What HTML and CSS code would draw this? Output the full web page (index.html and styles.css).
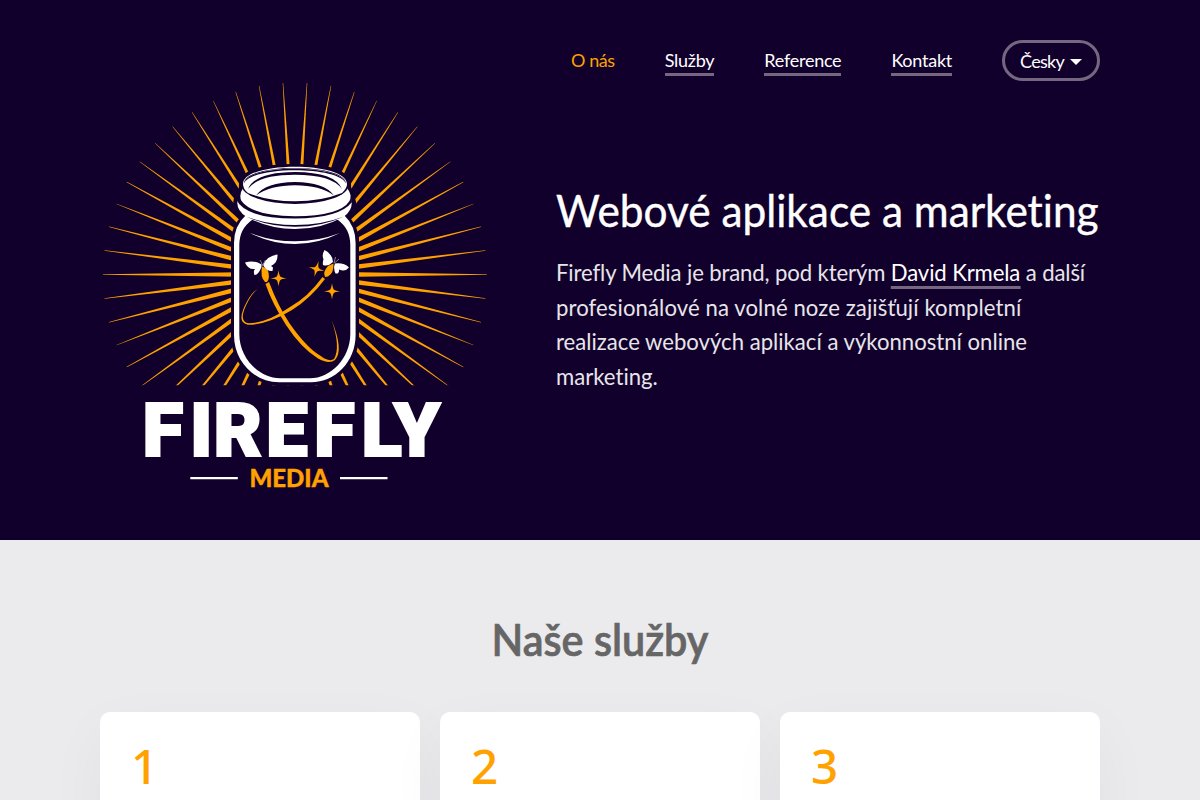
FILE: index.html
```html
<!DOCTYPE html>
<html lang="cs">
<head>
<meta charset="utf-8">
<title>Firefly Media</title>
<link rel="stylesheet" href="styles.css">
</head>
<body>
<header class="hero">
  <div class="hero-inner">
    <svg class="logo" viewBox="100 80 390 415" role="img" aria-label="Firefly Media">
      <defs>
        <clipPath id="sky"><rect x="100" y="80" width="390" height="305.3"/></clipPath>
        <g id="rays">
          <path id="ray" d="M295 271.3L487 274.3V274.7L295 277.7z"/>
          <use href="#ray" transform="rotate(7.2 295 274.5)"/>
          <use href="#ray" transform="rotate(14.4 295 274.5)"/>
          <use href="#ray" transform="rotate(21.6 295 274.5)"/>
          <use href="#ray" transform="rotate(28.8 295 274.5)"/>
        </g>
        <path id="spark" d="M0-8Q.9-2.1 2-1.6Q2.6-.9 8 0Q2.6.9 2 1.6Q.9 2.1 0 8Q-.9 2.1-2 1.6Q-2.6.9-8 0Q-2.6-.9-2-1.6Q-.9-2.1 0-8z"/>
      </defs>
      <g clip-path="url(#sky)" class="orange">
        <use href="#rays"/>
        <use href="#rays" transform="rotate(36 295 274.5)"/>
        <use href="#rays" transform="rotate(72 295 274.5)"/>
        <use href="#rays" transform="rotate(108 295 274.5)"/>
        <use href="#rays" transform="rotate(144 295 274.5)"/>
        <use href="#rays" transform="rotate(180 295 274.5)"/>
        <use href="#rays" transform="rotate(216 295 274.5)"/>
        <use href="#rays" transform="rotate(252 295 274.5)"/>
        <use href="#rays" transform="rotate(288 295 274.5)"/>
        <use href="#rays" transform="rotate(324 295 274.5)"/>
      </g>
      <path class="night" d="M231 238Q232 228 239 219Q231 210 234 198L239 187Q237 164 295 164Q353 164 351 187L355 198Q359 210 351 219Q358 228 359 238V336C359 364 336 385.6 311 385.6H279C254 385.6 231 364 231 336z"/>
      <path class="white" fill-rule="evenodd" d="M246 215Q234 226 234 243V335C234 362 255 382.3 279 382.3H311C335 382.3 355.6 362 355.6 335V243Q355.6 226 344 215zM252 220Q239.3 229 239.3 245V334C239.3 358 259 378.3 280 378.3H310C331 378.3 350.3 358 350.3 334V245Q350.3 229 338 220z"/>
      <path class="white" d="M238 199Q235 209 246 216.5Q268 229 295 229Q322 229 344 216.5Q354 209 351 199z"/>
      <path class="night" d="M246 216.500Q268 226.800 295 226.800Q322 226.800 344 216.500Q322 225 295 225Q268 225 246 216.500z"/>
      <path class="night" d="M236 199Q245 218.500 295 218.600Q340 218 352 202L350 190H240z"/>
      <path class="white" d="M243 188Q238.500 195 241.500 201Q253 216 295 216.200Q340 216 349.500 201Q352.500 195 347 188z"/>
      <ellipse class="night" cx="295" cy="185.200" rx="53.500" ry="18.800"/>
      <path class="white" fill-rule="evenodd" d="M243 184C243 161 347 161 347 184C347 188 344 191 342 193Q321 201.300 295 201.300Q269 201.300 248 193Q243 189 243 184zM244 183C246 163 344 163 346 183C341 163.500 249 163.500 244 183z"/>
      <path class="night" d="M243.800 184C246 163.500 344 163.500 346.200 184C340 165.800 250 165.800 243.800 184z"/>
      <path class="night" d="M248 189Q255 172.200 295 172Q335 172.200 342 189Q332 174.700 295 174.700Q258 174.700 248 189z"/>
      <path class="night" d="M256 195.500Q266 182.300 295 182.100Q324 182.300 334 195.500Q320 185.300 295 185.300Q270 185.300 256 195.500z"/>
      <path class="white" d="M250 233Q272 241.300 295 241.300Q318 241.300 340 233Q318 244 295 244Q272 244 250 233z"/>
      <g class="orange">
        <path d="M265.500 284L269 282Q278 306 290 324Q307 348 320 355.500Q329 362.500 334 359Q341 347 331.500 320Q344 350 335 360Q329 364.500 318 358.500Q301 348 286 325Q272 303 265.500 284z"/>
        <path d="M325 279L322.500 277Q308 297 290 307Q267 323 249 323.300Q237 322 248 301.500Q253 292 258 289Q252 292 247.500 300.500Q235 323 248 324.700Q267 325 292 310Q311 298 325 279z"/>
        <path d="M262 266.500L267.500 269Q270.500 278 267 282L265 282Q260 277 262 266.500z"/>
        <path d="M333.500 263.500L328 266Q322.500 272 325 277L328 276.500Q334 273 333.500 263.500z"/>
        <use href="#spark" x="278.500" y="278.300"/>
        <use href="#spark" x="332" y="291.300"/>
        <use href="#spark" transform="translate(316.500 269) rotate(15)"/>
      </g>
      <g class="white">
        <path d="M261.500 264.500Q254 259.500 245 262.500Q248 270 255 269Q253 271 254.500 275Q258 275.500 261.500 267zM263.500 264.500Q267 256 277.500 254.500Q278 263 271 266L273 267.500L272.500 271Q267 271.500 263.500 266z"/>
        <path d="M333 262Q332 253 324.500 250Q321.500 255 323.500 259.500Q322.500 262 323 265Q328 267 333 262zM335 263.500Q344 262.500 349 267.500Q345.500 272 339 269.500Q339.500 274 335.500 273.500Q333 268 335 263.500z"/>
      </g>
      <path class="feelers" d="M260 260Q261.500 262 262.500 265.500L265.500 260M334 263L335.500 257M334.500 263L339 259"/>
      <text class="wordmark" y="455.700" x="142.600 190 213.500 266 314 361.500 393.500">FIREFLY</text>
      <path class="white" d="M190.300 477h47.500v2.300h-47.500zM340 477h47.500v2.300H340z"/>
      <text class="media" x="249.500" y="487.300" textLength="79" lengthAdjust="spacingAndGlyphs">MEDIA</text>
    </svg>
    <div class="hero-side">
      <nav class="nav">
        <a class="nav-link nav-active">O nás</a>
        <a class="nav-link">Služby</a>
        <a class="nav-link">Reference</a>
        <a class="nav-link">Kontakt</a>
        <button class="lang">Česky<span class="caret"></span></button>
      </nav>
      <h1 class="title">Webové aplikace a marketing</h1>
      <p class="lead"><span class="tight">Firefly Media je brand, pod kterým <a class="person">David Krmela</a> a další</span><br><span class="loose">profesionálové na volné noze zajišťují kompletní</span><br>realizace webových aplikací a výkonnostní online<br>marketing.</p>
    </div>
  </div>
</header>
<main class="services">
  <h2 class="heading">Naše služby</h2>
  <div class="cards">
    <section class="card">1</section>
    <section class="card">2</section>
    <section class="card">3</section>
  </div>
</main>
</body>
</html>
```

FILE: styles.css
```css
* { box-sizing: border-box; }
html { height: 100%; overflow: hidden; }
body {
  margin: 0;
  height: 800px;
  overflow: hidden;
  font-family: Lato, "Open Sans", sans-serif;
  font-variant-ligatures: none;
  background: #ebebed;
}
.hero { height: 540px; background: #12002c; color: #fff; }
.hero-inner { width: 1000px; margin: 0 auto; display: flex; justify-content: space-between; }
.logo { width: 390px; height: 415px; margin-top: 80px; flex: none; }
.orange { fill: #ffa200; }
.white { fill: #fff; }
.night { fill: #12002c; }
.feelers { fill: none; stroke: #fff; stroke-width: .5; }
.wordmark { font-family: Roboto, sans-serif; font-weight: 900; font-size: 74.5px; fill: #fff; stroke: #fff; stroke-width: 2.2; }
.media { font-family: Lato, sans-serif; font-weight: 900; font-size: 25px; fill: #ffa200; stroke: #ffa200; stroke-width: .4; }
.hero-side { width: 544px; }
.nav { display: flex; justify-content: flex-end; align-items: flex-start; gap: 50px; margin-top: 40px; height: 41px; font-size: 18px; letter-spacing: -.25px; }
.nav-link { margin-top: 8px; height: 28px; line-height: 24px; border-bottom: 3px solid #75677f; white-space: nowrap; }
.nav-active { color: #ffa200; border-color: transparent; letter-spacing: -.45px; }
.lang {
  display: flex; align-items: center; gap: 6px;
  width: 98px; height: 41px; padding: 0 0 0 15px;
  border: 3px solid #75677f; border-radius: 21px;
  background: none; color: #fff; font: inherit; letter-spacing: -.7px;
}
.caret { border: 6px solid transparent; border-top-color: #fff; border-bottom: 0; margin-top: 2px; }
.title { margin: 99px 0 0; font-size: 45px; line-height: 60px; font-weight: 400; white-space: nowrap; transform: scaleX(.941); transform-origin: 0 0; -webkit-text-stroke: .4px #fff; }
.lead { margin: 15px 0 0; font-size: 23px; line-height: 34.5px; color: #e7e5ea; white-space: nowrap; transform: scaleX(.962); transform-origin: 0 0; }
.tight { letter-spacing: -.13px; }
.loose { letter-spacing: .1px; }
.person { color: #fff; border-bottom: 3px solid #75677f; }
.services { height: 260px; padding-top: 69px; overflow: hidden; }
.heading { margin: 0; text-align: center; color: #666; font-size: 44.5px; line-height: 60px; font-weight: 600; transform: scaleX(.93); -webkit-text-stroke: .7px #666; }
.cards { width: 1000px; margin: 43px auto 0; display: grid; grid-template-columns: repeat(3, 1fr); gap: 20px; }
.card {
  height: 300px; padding: 24px 31px; border-radius: 10px;
  background: #fff; color: #ffa200; font-family: "Noto Sans", sans-serif; font-size: 47.5px; line-height: 60px; font-weight: 500;
  box-shadow: 0 20px 60px rgba(20, 0, 60, .045);
}
```
